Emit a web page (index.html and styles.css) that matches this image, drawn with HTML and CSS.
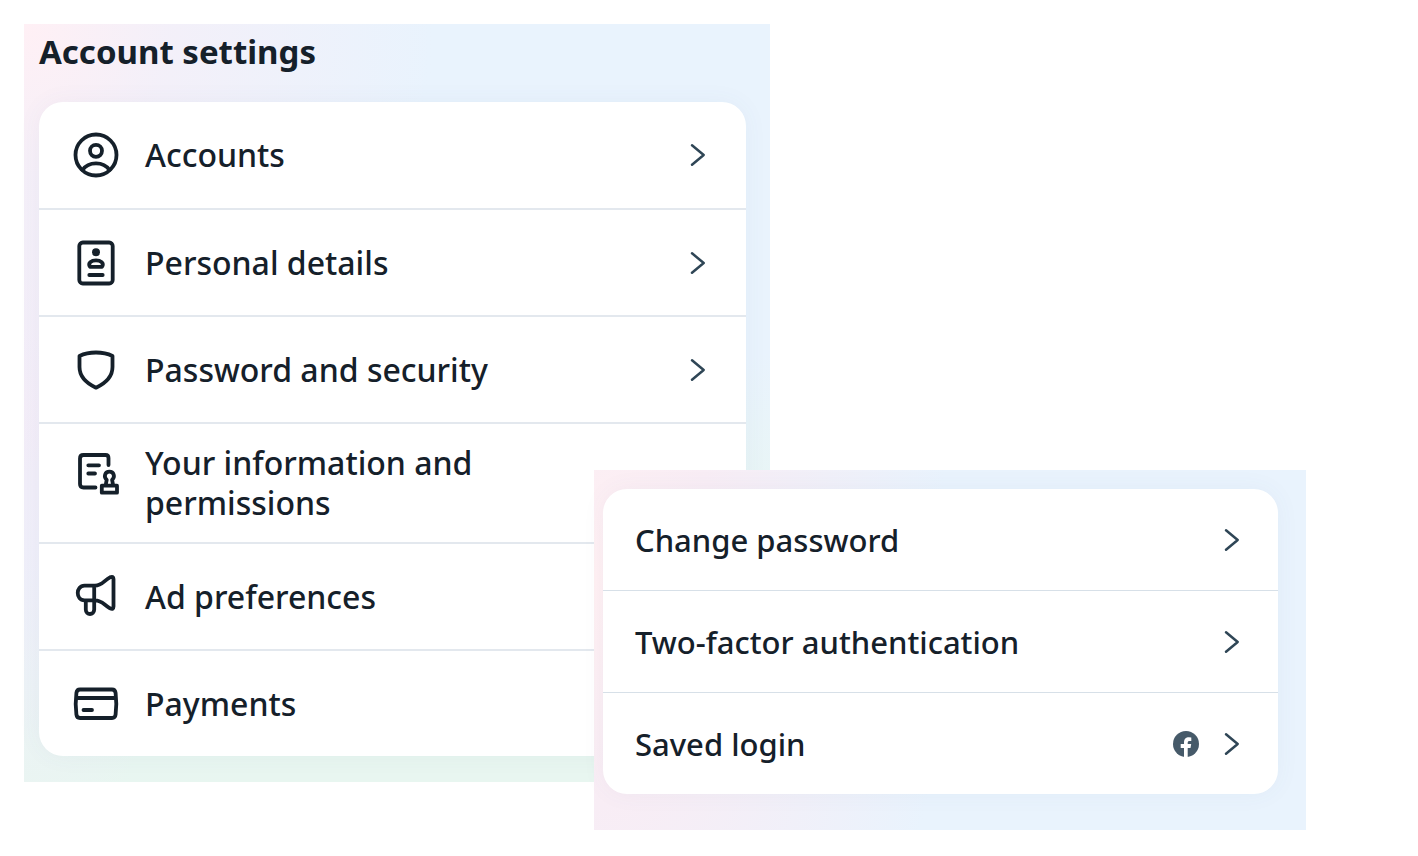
FILE: index.html
```html
<!DOCTYPE html>
<html lang="en">
<head>
    <meta charset="UTF-8">
    <meta name="viewport" content="width=device-width, initial-scale=1">
    <title>Account settings</title>
    <link rel="stylesheet" href="styles.css">
</head>
<body>
<svg class="defs" aria-hidden="true">
    <symbol id="chevron" viewBox="0 0 24 24"><path d="M6 2.3L17.7 12L6 21.7"/></symbol>
</svg>
<main class="stage">
    <section class="panel settings">
        <h1>Account settings</h1>
        <ul class="card">
            <li><a class="row" href="#accounts">
                <svg class="icon" viewBox="0 0 48 48"><circle cx="24" cy="24" r="20.5"/><circle cx="24" cy="19.8" r="6"/><path d="M10.5 39C13.5 34.5 18 32.3 24 32.3S34.5 34.5 37.5 39"/></svg>
                <span class="label">Accounts</span>
                <svg class="chevron"><use href="#chevron"/></svg>
            </a></li>
            <li><a class="row" href="#details">
                <svg class="icon" viewBox="0 0 48 48"><rect x="7.3" y="3.5" width="33.4" height="41" rx="3.5"/><circle class="fill" cx="24" cy="13.2" r="4"/><path d="M18 27.8C15.5 24 19.5 21.3 24 21.3S32.5 24 30 27.8ZM17.3 36H30.7"/></svg>
                <span class="label">Personal details</span>
                <svg class="chevron"><use href="#chevron"/></svg>
            </a></li>
            <li><a class="row" href="#security">
                <svg class="icon" viewBox="0 0 48 48"><path d="M7.5 10C17 5.3 31 5.3 40.5 10V21C40.5 30 34 37 24 41.7C14 37 7.5 30 7.5 21Z"/></svg>
                <span class="label">Password and security</span>
                <svg class="chevron"><use href="#chevron"/></svg>
            </a></li>
            <li><a class="row tall" href="#information">
                <svg class="icon" viewBox="0 0 48 48"><path d="M36.5 16V9Q36.5 6 33.5 6H11.5Q8 6 8 9.5V35Q8 38.5 11.5 38.5H23.500M16.300 16.300H27M16.300 24.500H23M29.800 36.700H45V43.700H29.800ZM33.700 36L34.700 30.800C31.300 27.500 33 22.700 37.400 22.700S43.500 27.500 40.100 30.800L41.100 36"/></svg>
                <span class="label">Your information and permissions</span>
                <svg class="chevron"><use href="#chevron"/></svg>
            </a></li>
            <li><a class="row" href="#ads">
                <svg class="icon" viewBox="0 0 48 48"><path d="M22.2 27.3H12.5C3.5 27.3 3.5 12.7 12.5 12.7H23C30 12.7 31.5 8 38 4.3Q41.5 2.8 41.5 6V33.5Q41.5 37 38 35.3C31.5 31.5 30 27.3 23 27.3M22.2 12.7V36.5C22.2 42.5 13.8 42.5 13.8 36.5V27.3"/></svg>
                <span class="label">Ad preferences</span>
                <svg class="chevron"><use href="#chevron"/></svg>
            </a></li>
            <li><a class="row" href="#payments">
                <svg class="icon" viewBox="0 0 48 48"><path d="M8 9.5H40Q43.2 9.5 43.6 13Q45 24 43.6 34.5Q43.2 38 40 38H8Q4.8 38 4.4 34.5Q3 24 4.4 13Q4.8 9.5 8 9.5ZM4 18H44M11.500 30H20"/></svg>
                <span class="label">Payments</span>
                <svg class="chevron"><use href="#chevron"/></svg>
            </a></li>
        </ul>
    </section>

    <section class="panel login" aria-label="Login">
        <ul class="card">
            <li><a class="row" href="#password">
                <span class="label">Change password</span>
                <svg class="chevron"><use href="#chevron"/></svg>
            </a></li>
            <li><a class="row" href="#two-factor">
                <span class="label">Two-factor authentication</span>
                <svg class="chevron"><use href="#chevron"/></svg>
            </a></li>
            <li><a class="row" href="#saved-login">
                <span class="label">Saved login</span>
                <svg class="facebook" viewBox="0 0 26 26" role="img" aria-label="Facebook"><circle cx="13" cy="13" r="13"/><path d="M11 26V17H7.7V13H11V11.5C11 7.8 12.8 6.2 16 6.2Q17.3 6.2 18.3 6.5V10H16.7C15.2 10 14.7 10.6 14.7 12V13H18.2L17.5 17H14.7V26Z"/></svg>
                <svg class="chevron"><use href="#chevron"/></svg>
            </a></li>
        </ul>
    </section>
</main>
</body>
</html>
```

FILE: styles.css
```css
*{margin:0;padding:0;box-sizing:border-box;}
body{background:#fff;color:#15202a;font-family:"Noto Sans",sans-serif;font-weight:500;}
.defs{position:absolute;width:0;height:0;}

/* the login panel shares the grid row and overlaps the settings panel */
.stage{
    display:grid;
    grid-template-columns:570fr 176fr 536fr 88fr;
    align-items:start;
    padding:24px;
}
.panel{grid-row:1;}
.settings{
    grid-column:1 / 3;
    padding:8px 24px 26px 15px;
    background:
        radial-gradient(ellipse 55% 60% at 0 0,#fff0f5 0%,rgba(246,239,248,.8) 35%,rgba(240,240,251,0) 100%),
        radial-gradient(ellipse 25% 60% at 0 50%,#f3edf8 0%,rgba(240,240,251,0) 100%),
        linear-gradient(165deg,#e9f3fd 55%,#e8f6f2 75%,#e8f6f0 85%);
}
.login{
    grid-column:2 / 4;
    margin-top:446px;
    padding:19px 28px 36px 9px;
    background:
        radial-gradient(ellipse 50% 180% at 0 30%,#fff0f3 0%,#f8edf5 35%,rgba(240,240,251,0) 100%),
        #e9f3fd;
}
h1{font-size:33px;line-height:40px;font-weight:700;margin-bottom:30px;}
.card{
    list-style:none;
    background:#fff;
    border-radius:24px;
    box-shadow:0 0 24px rgba(70,90,130,.05);
}
.row{
    display:flex;
    align-items:center;
    gap:25px;
    min-height:106px;
    padding:19px 36px 19px 33px;
    color:inherit;
    text-decoration:none;
    font-size:32px;
    line-height:40px;
}
li + li{border-top:2px solid #e3e8ee;}
li + li .row{min-height:105px;}
.tall .icon{align-self:flex-start;}
.label{max-width:400px;margin-right:auto;}
.login .row{
    gap:21px;
    min-height:101px;
    padding:19px 34px 19px 32px;
    font-size:31px;
}
.login li + li{border-top-width:1px;border-color:#d7e0e8;}
.icon{
    flex:none;
    width:48px;
    height:60px;
    fill:none;
    stroke:#15202a;
    stroke-width:3.8;
    stroke-linecap:round;
    stroke-linejoin:round;
}
.icon .fill{fill:#15202a;stroke:none;}
.chevron{
    flex:none;
    width:24px;
    height:24px;
    fill:none;
    stroke:#2f4656;
    stroke-width:2.5;
    stroke-linecap:round;
    stroke-linejoin:round;
}
.facebook{flex:none;width:26px;height:26px;fill:#465a69;}
.facebook path{fill:#fff;}
```
